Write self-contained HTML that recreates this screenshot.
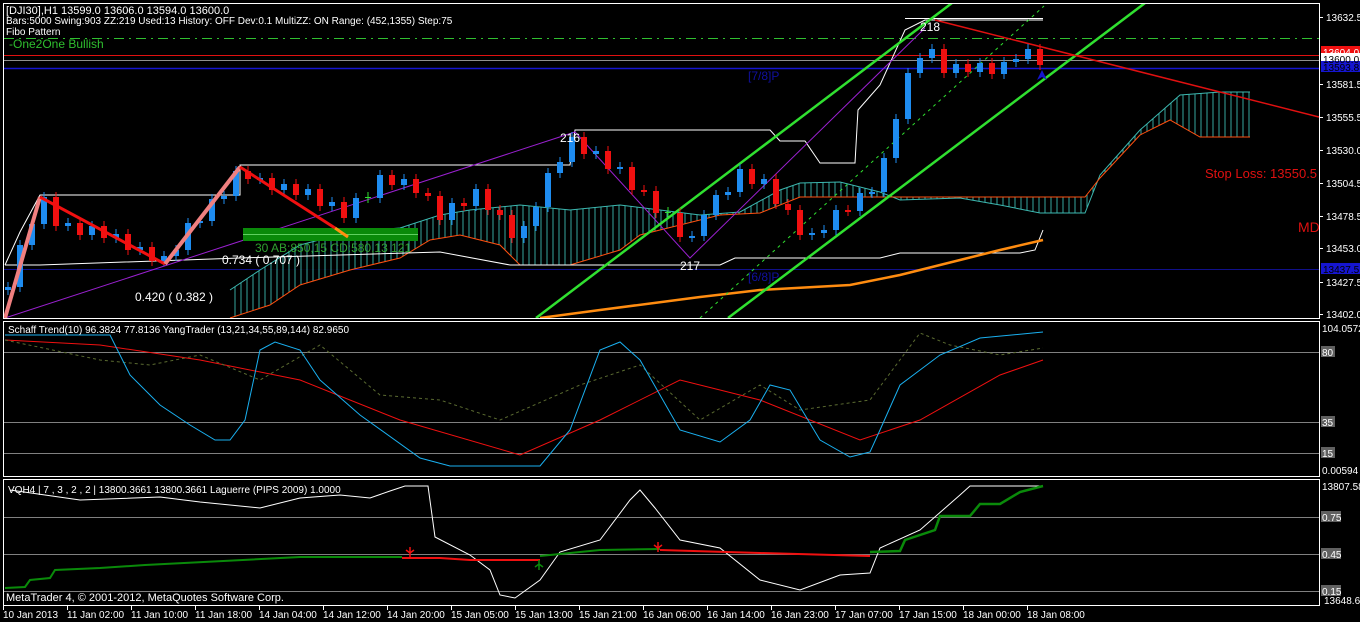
<!DOCTYPE html>
<html><head><meta charset="utf-8">
<style>
html,body{margin:0;padding:0;background:#000;width:1360px;height:622px;overflow:hidden}
svg{display:block}
text{font-family:"Liberation Sans",sans-serif}
</style></head><body>
<svg width="1360" height="622" xmlns="http://www.w3.org/2000/svg">
<defs>
<pattern id="hatch" width="6" height="10" patternUnits="userSpaceOnUse"><rect width="6" height="10" fill="#000"/><line x1="1" y1="0" x2="1" y2="10" stroke="#3cb8b0" stroke-width="1"/></pattern>
<clipPath id="c1"><rect x="4" y="4" width="1315" height="314"/></clipPath>
<clipPath id="c2"><rect x="4" y="322" width="1315" height="155"/></clipPath>
<clipPath id="c3"><rect x="4" y="480" width="1315" height="125"/></clipPath>
</defs>
<rect width="1360" height="622" fill="#000"/>
<rect x="3.5" y="3.5" width="1316" height="315" fill="none" stroke="#fff"/>
<rect x="3.5" y="321.5" width="1316" height="155" fill="none" stroke="#fff"/>
<rect x="3.5" y="479.5" width="1316" height="126" fill="none" stroke="#fff"/>

<g clip-path="url(#c1)">
<line x1="4" y1="38.5" x2="1319" y2="38.5" stroke="#2fbf2f" stroke-dasharray="10,5,2,5"/>
<line x1="4" y1="55.5" x2="1319" y2="55.5" stroke="#e01010"/>
<line x1="4" y1="60.5" x2="1319" y2="60.5" stroke="#909090"/>
<line x1="4" y1="68.5" x2="1319" y2="68.5" stroke="#1515d0" stroke-width="1.5"/>
<line x1="4" y1="269.5" x2="1319" y2="269.5" stroke="#10108a"/>
<polygon fill="url(#hatch)" opacity="0.9" points="230,290 260,270 300,245 350,232 400,228 440,215 470,210 520,205 570,210 620,205 660,210 700,215 740,212 780,190 800,183 840,182 880,192 900,200 960,198 1000,205 1040,213 1085,213 1100,175 1140,130 1180,95 1220,92 1250,92 1250,137 1200,137 1170,120 1140,135 1100,178 1085,197 900,197 800,197 760,213 720,215 680,225 640,235 620,250 570,265 520,265 500,245 460,235 430,240 400,258 350,270 300,285 270,305 230,318"/>
<polyline fill="none" stroke="#3cb8b0" points="230,290 260,270 300,245 350,232 400,228 440,215 470,210 520,205 570,210 620,205 660,210 700,215 740,212 780,190 800,183 840,182 880,192 900,200 960,198 1000,205 1040,213 1085,213 1100,175 1140,130 1180,95 1220,92 1250,92"/>
<polyline fill="none" stroke="#ff5010" points="230,318 270,305 300,285 350,270 400,258 430,240 460,235 500,245 520,265 570,265 620,250 640,235 680,225 720,215 760,213 800,197 900,197 1085,197 1100,178 1140,135 1170,120 1200,137 1250,137"/>
<polyline fill="none" stroke="#fff" points="5,265 20,232 40,195 240,195 240,165 570,165 575,130 770,130 780,141 805,141 820,163 855,163 858,110 880,85 905,30 925,20 1043,20"/>
<polyline fill="none" stroke="#fff" points="5,265 40,265 240,258 440,252 510,265 720,265 735,258 880,258 900,253 1020,253 1035,250 1043,230"/>
<line x1="905" y1="18.5" x2="1043" y2="18.5" stroke="#fff"/>
<polyline fill="none" stroke="#ff8c10" stroke-width="2.5" points="540,318 600,310 700,297 760,290 850,285 900,275 960,260 1000,250 1043,240"/>
<polyline fill="none" stroke="#9a20d0" points="5,318 575,132 690,258 925,28"/>
<line x1="536" y1="318" x2="952" y2="3" stroke="#30e030" stroke-width="2.5"/>
<line x1="728" y1="318" x2="1145" y2="3" stroke="#30e030" stroke-width="2.5"/>
<line x1="700" y1="318" x2="1044" y2="6" stroke="#30e030" stroke-dasharray="3,4"/>
<line x1="935" y1="20" x2="1319" y2="117" stroke="#e01010" stroke-width="1.5"/>
<path d="M1037,80 L1042,70 L1047,80 L1042,77Z" fill="#1515d0"/>
<rect x="243" y="228" width="175" height="13" fill="#0a8a0a"/>
<line x1="243" y1="234.5" x2="418" y2="234.5" stroke="#60d060"/>
<path fill="none" stroke="#1e8cf0" d="M8,282V295M20,240V292M32,219V250M44,192V229M68,218V231M92,221V240M116,229V243M140,242V255M164,251V266M176,245V261M188,218V255M200,216V228M212,194V226M224,191V204M236,166V201M260,173V184M284,179V195M308,184V200M332,197V211M356,193V223M380,170V203M404,174V190M452,198V225M476,184V211M524,221V243M536,202V231M548,168V212M560,157V178M572,132V167M596,146V159M620,162V174M692,231V242M704,210V241M716,190V220M728,187V200M740,164V197M764,174V189M812,228V240M824,225V238M836,205V235M860,188V216M872,187V198M884,153V197M896,114V163M908,68V124M920,53V78M932,44V63M956,59V78M980,58V77M1004,57V79M1016,54V67M1028,44V64"/>
<path fill="#1e8cf0" d="M5,287h6v3h-6zM17,245h6v42h-6zM29,224h6v21h-6zM41,197h6v27h-6zM65,223h6v3h-6zM89,226h6v9h-6zM113,234h6v4h-6zM137,247h6v3h-6zM161,256h6v5h-6zM173,250h6v6h-6zM185,223h6v27h-6zM197,221h6v2h-6zM209,199h6v22h-6zM221,196h6v3h-6zM233,171h6v25h-6zM257,178h6v2h-6zM281,184h6v6h-6zM305,189h6v6h-6zM329,202h6v4h-6zM353,198h6v20h-6zM377,175h6v23h-6zM401,179h6v6h-6zM449,203h6v17h-6zM473,189h6v17h-6zM521,226h6v12h-6zM533,207h6v19h-6zM545,173h6v34h-6zM557,162h6v11h-6zM569,137h6v25h-6zM593,151h6v3h-6zM617,167h6v2h-6zM689,236h6v2h-6zM701,215h6v21h-6zM713,195h6v20h-6zM725,192h6v3h-6zM737,169h6v23h-6zM761,179h6v5h-6zM809,233h6v2h-6zM821,230h6v3h-6zM833,210h6v20h-6zM857,193h6v18h-6zM869,192h6v2h-6zM881,158h6v34h-6zM893,119h6v39h-6zM905,73h6v46h-6zM917,58h6v15h-6zM929,49h6v9h-6zM953,64h6v9h-6zM977,63h6v9h-6zM1001,62h6v12h-6zM1013,59h6v3h-6zM1025,49h6v10h-6z"/>
<path fill="none" stroke="#f01010" d="M56,192V231M80,218V240M104,221V243M128,229V255M152,242V266M248,166V184M272,173V195M296,179V200M320,184V211M344,197V223M392,170V190M416,174V198M428,188V201M440,191V225M464,198V211M488,184V215M500,205V220M512,210V243M584,132V159M608,146V174M632,162V195M644,185V196M656,186V218M680,208V242M752,164V189M776,174V209M788,199V215M800,205V240M848,205V216M944,44V78M968,59V77M992,58V79M1040,44V70"/>
<path fill="#f01010" d="M53,197h6v29h-6zM77,223h6v12h-6zM101,226h6v12h-6zM125,234h6v16h-6zM149,247h6v14h-6zM245,171h6v8h-6zM269,178h6v12h-6zM293,184h6v11h-6zM317,189h6v17h-6zM341,202h6v16h-6zM389,175h6v10h-6zM413,179h6v14h-6zM425,193h6v3h-6zM437,196h6v24h-6zM461,203h6v3h-6zM485,189h6v21h-6zM497,210h6v5h-6zM509,215h6v23h-6zM581,137h6v17h-6zM605,151h6v18h-6zM629,167h6v23h-6zM641,190h6v2h-6zM653,191h6v22h-6zM677,213h6v24h-6zM749,169h6v15h-6zM773,179h6v25h-6zM785,204h6v6h-6zM797,210h6v25h-6zM845,210h6v2h-6zM941,49h6v24h-6zM965,64h6v8h-6zM989,63h6v11h-6zM1037,49h6v16h-6z"/>
<path fill="none" stroke="#30e030" d="M368,192V203M365,197.5h6M668,207V218M665,212.5h6"/>
<polyline fill="none" stroke="#f08080" stroke-width="4" points="5,318 40,197"/>
<polyline fill="none" stroke="#f01010" stroke-width="3" points="40,197 165,264"/>
<polyline fill="none" stroke="#f08080" stroke-width="4" points="165,264 240,167"/>
<polyline fill="none" stroke="#f01010" stroke-width="3" points="240,167 335,228"/>
<polyline fill="none" stroke="#ff9010" stroke-width="3" points="335,228 348,237"/>
</g>

<g clip-path="url(#c2)">
<line x1="4" y1="352.5" x2="1319" y2="352.5" stroke="#808080"/>
<line x1="4" y1="422.5" x2="1319" y2="422.5" stroke="#808080"/>
<line x1="4" y1="453.5" x2="1319" y2="453.5" stroke="#808080"/>
<polyline fill="none" stroke="#f01010" points="5,340 100,345 200,360 300,380 400,420 520,455 600,420 680,380 760,400 860,440 920,420 1000,375 1043,360"/>
<polyline fill="none" stroke="#5a6a30" stroke-dasharray="3,3" points="5,340 100,360 150,365 200,355 260,380 320,345 380,395 440,400 500,420 580,385 640,365 700,420 760,385 800,410 870,400 920,333 950,345 1000,355 1043,348"/>
<polyline fill="none" stroke="#1ab0f0" points="5,335 110,335 130,375 160,405 190,425 215,440 230,440 245,420 260,350 275,342 300,350 320,380 360,415 420,458 450,466 540,466 570,430 600,350 620,342 640,360 680,430 720,442 750,420 770,385 790,390 820,440 850,457 870,452 880,430 900,385 940,355 980,338 1043,332"/>
</g>

<g clip-path="url(#c3)">
<line x1="4" y1="517.5" x2="1319" y2="517.5" stroke="#808080"/>
<line x1="4" y1="554.5" x2="1319" y2="554.5" stroke="#808080"/>
<line x1="4" y1="591.5" x2="1319" y2="591.5" stroke="#808080"/>
<polyline fill="none" stroke="#fff" points="10,490 80,500 160,497 200,502 260,508 300,498 340,495 370,498 390,491 405,486 428,486 435,537 470,555 490,570 500,595 515,598 540,580 560,552 600,540 630,500 640,490 655,508 680,540 720,548 760,580 800,590 840,575 870,573 880,548 920,530 960,495 970,486 1043,486"/>
<polyline fill="none" stroke="#0a8a0a" stroke-width="2" points="5,588 25,587 30,580 50,578 55,570 100,568 145,565 300,557 402,557"/>
<polyline fill="none" stroke="#f01010" stroke-width="2" points="402,558 440,558 470,560 540,560"/>
<polyline fill="none" stroke="#0a8a0a" stroke-width="2" points="540,556 600,550 660,549"/>
<polyline fill="none" stroke="#f01010" stroke-width="2" points="660,550 760,553 870,556"/>
<polyline fill="none" stroke="#0a8a0a" stroke-width="2.5" points="870,552 900,551 905,540 935,530 940,516 970,516 980,504 1000,504 1020,492 1043,486"/>
<path d="M410 547 L410 557 M406 550 L410 553 L414 550" stroke="#f01010" fill="none" stroke-width="1.5"/>
<path d="M658 542 L658 552 M654 545 L658 548 L662 545" stroke="#f01010" fill="none" stroke-width="1.5"/>
<path d="M539 570 L539 560 M535 567 L539 564 L543 567" stroke="#0a8a0a" fill="none" stroke-width="1.5"/>
</g>

<g font-size="11" fill="#fff">
<text x="6" y="14">[DJI30],H1  13599.0 13606.0 13594.0 13600.0</text>
<text x="6" y="24" font-size="10">Bars:5000  Swing:903  ZZ:219  Used:13  History: OFF Dev:0.1  MultiZZ: ON  Range: (452,1355)  Step:75</text>
<text x="6" y="35" font-size="10">Fibo Pattern</text>
<text x="9" y="48" font-size="12" fill="#2fbf2f">-One2One Bullish</text>
<text x="560" y="142" font-size="12">216</text>
<text x="680" y="270" font-size="12">217</text>
<text x="920" y="31" font-size="12">218</text>
<text x="748" y="80" fill="#1010a0" font-size="12">[7/8]P</text>
<text x="748" y="281" fill="#1010a0" font-size="12">[6/8]P</text>
<text x="255" y="252" fill="#2fa02f" font-size="12">30   AB:850,15 CD:580,13   121</text>
<text x="222" y="264" font-size="12">0.734 ( 0.707 )</text>
<text x="135" y="301" font-size="12">0.420 ( 0.382 )</text>
<text x="1205" y="178" fill="#e01010" font-size="13">Stop Loss: 13550.5</text>
<text x="1298" y="232" fill="#e01010" font-size="14">MD</text>
<text x="8" y="333" font-size="10">Schaff Trend(10) 96.3824 77.8136  YangTrader (13,21,34,55,89,144) 82.9650</text>
<text x="8" y="493" font-size="10">VQH4 | 7 , 3 , 2 , 2  |  13800.3661 13800.3661  Laguerre (PIPS 2009) 1.0000</text>
<text x="6" y="601" font-size="11">MetaTrader 4, © 2001-2012, MetaQuotes Software Corp.</text>
</g>

<path stroke="#fff" d="M1320,17.5h3M1320,84.5h3M1320,117.5h3M1320,150.5h3M1320,183.5h3M1320,216.5h3M1320,248.5h3M1320,282.5h3M1320,314.5h3"/>
<rect x="1321" y="46" width="39" height="11" fill="#f01010"/>
<rect x="1321" y="53" width="39" height="11" fill="#fff"/>
<rect x="1321" y="61" width="39" height="11" fill="#1515d0"/>
<rect x="1321" y="263" width="39" height="11" fill="#1515d0"/>
<rect x="1321" y="346" width="14" height="11" fill="#606060"/>
<rect x="1321" y="416" width="14" height="11" fill="#606060"/>
<rect x="1321" y="447" width="14" height="11" fill="#606060"/>
<rect x="1321" y="511" width="20" height="11" fill="#606060"/>
<rect x="1321" y="548" width="20" height="11" fill="#606060"/>
<rect x="1321" y="585" width="20" height="11" fill="#606060"/>
<g font-size="10" fill="#fff">
<text x="1326" y="21">13632.5</text>
<text x="1326" y="88">13581.5</text>
<text x="1326" y="121">13555.5</text>
<text x="1326" y="154">13530.0</text>
<text x="1326" y="187">13504.5</text>
<text x="1326" y="220">13478.5</text>
<text x="1326" y="252">13453.0</text>
<text x="1326" y="286">13427.5</text>
<text x="1326" y="318">13402.0</text>
<text x="1323" y="56">13604.0</text>
<text x="1323" y="63" fill="#000">13600.0</text>
<text x="1323" y="71" fill="#000">13593.8</text>
<text x="1323" y="273" fill="#000">13437.5</text>
</g>
<g font-size="10" fill="#fff">
<text x="1322" y="332">104.0572</text>
<text x="1322" y="356">80</text>
<text x="1322" y="426">35</text>
<text x="1322" y="457">15</text>
<text x="1322" y="474">0.00594</text>
<text x="1322" y="490">13807.58</text>
<text x="1322" y="521">0.75</text>
<text x="1322" y="558">0.45</text>
<text x="1322" y="595">0.15</text>
<text x="1324" y="604">13648.68</text>
</g>
<path stroke="#fff" d="M3.5,606v4M67.5,606v4M131.5,606v4M195.5,606v4M259.5,606v4M323.5,606v4M387.5,606v4M451.5,606v4M515.5,606v4M579.5,606v4M643.5,606v4M707.5,606v4M771.5,606v4M835.5,606v4M899.5,606v4M963.5,606v4M1027.5,606v4"/>
<g font-size="10" fill="#fff">
<text x="3" y="618">10 Jan 2013</text>
<text x="67" y="618">11 Jan 02:00</text>
<text x="131" y="618">11 Jan 10:00</text>
<text x="195" y="618">11 Jan 18:00</text>
<text x="259" y="618">14 Jan 04:00</text>
<text x="323" y="618">14 Jan 12:00</text>
<text x="387" y="618">14 Jan 20:00</text>
<text x="451" y="618">15 Jan 05:00</text>
<text x="515" y="618">15 Jan 13:00</text>
<text x="579" y="618">15 Jan 21:00</text>
<text x="643" y="618">16 Jan 06:00</text>
<text x="707" y="618">16 Jan 14:00</text>
<text x="771" y="618">16 Jan 23:00</text>
<text x="835" y="618">17 Jan 07:00</text>
<text x="899" y="618">17 Jan 15:00</text>
<text x="963" y="618">18 Jan 00:00</text>
<text x="1027" y="618">18 Jan 08:00</text>
</g>
</svg>
</body></html>
